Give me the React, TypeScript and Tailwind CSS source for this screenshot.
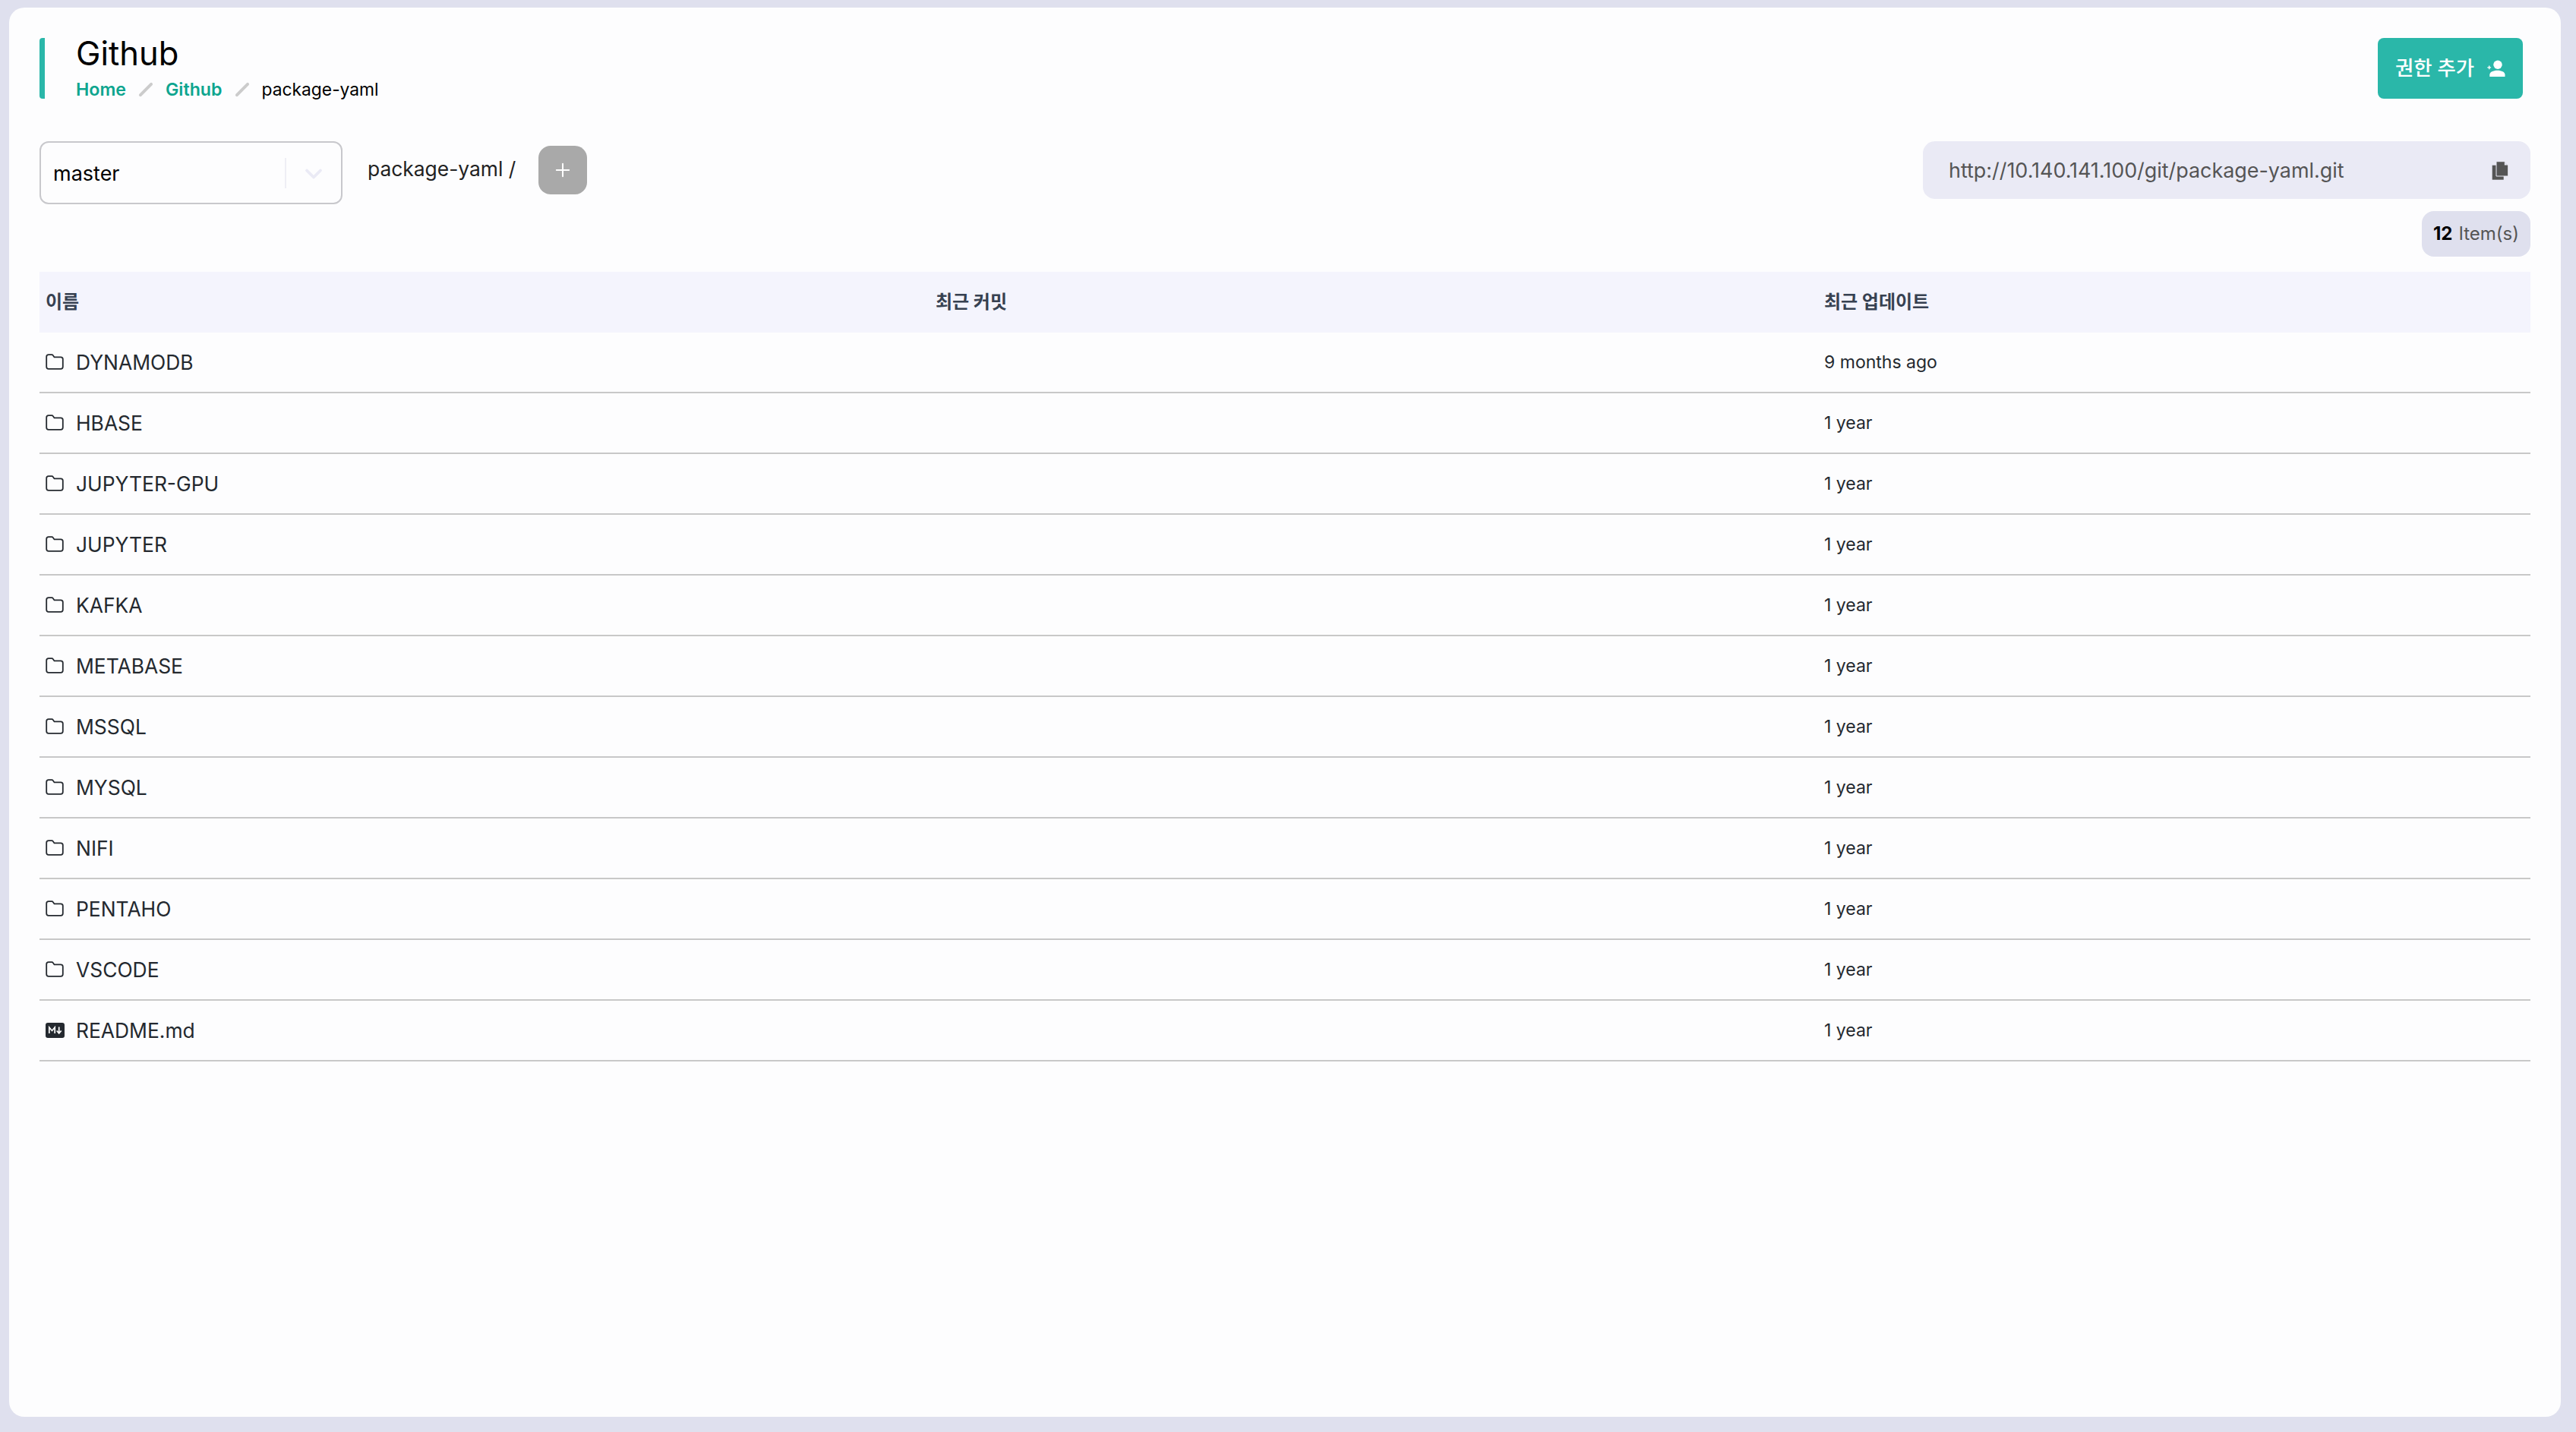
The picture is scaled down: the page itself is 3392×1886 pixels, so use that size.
import { Plus, ChevronDown } from 'lucide-react';

const font = "font-['Inter','Noto_Sans_CJK_KR',sans-serif]";

const rows = [
  { name: 'DYNAMODB', time: '9 months ago' },
  { name: 'HBASE', time: '1 year' },
  { name: 'JUPYTER-GPU', time: '1 year' },
  { name: 'JUPYTER', time: '1 year' },
  { name: 'KAFKA', time: '1 year' },
  { name: 'METABASE', time: '1 year' },
  { name: 'MSSQL', time: '1 year' },
  { name: 'MYSQL', time: '1 year' },
  { name: 'NIFI', time: '1 year' },
  { name: 'PENTAHO', time: '1 year' },
  { name: 'VSCODE', time: '1 year' },
  { name: 'README.md', time: '1 year', file: true },
];

const FolderIcon = () => (
  <svg viewBox="0 0 24 21" className="w-6 h-[21px] text-[#24292f]" fill="none" stroke="currentColor" strokeWidth="1.8">
    <path d="M1.2 5V17C1.2 18.8 2.2 19.8 4 19.8H20C21.8 19.8 22.8 18.8 22.8 17V7C22.8 5.2 21.8 4.4 20 4.4H11.5L9.8 2C9.4 1.4 8.8 1.2 8.2 1.2H4C2.2 1.2 1.2 2.2 1.2 4V5" />
  </svg>
);

const MarkdownIcon = () => (
  <svg viewBox="0 0 25 20" className="w-[25px] h-5 mr-[-1px]">
    <rect width="25" height="20" rx="3" fill="#24292f" />
    <path d="M4.8 14V6L8.5 10.5L12.2 6V14" fill="none" stroke="#fff" strokeWidth="1.7" />
    <path d="M17.7 5.5V13.5M14.7 10.5L17.7 14L20.7 10.5" fill="none" stroke="#fff" strokeWidth="1.7" />
  </svg>
);

const UserPlusIcon = () => (
  <svg viewBox="0 0 24 24" className="w-6 h-6" fill="#fff">
    <circle cx="14" cy="7.3" r="5.7" />
    <path d="M3.3 23V20.5C3.3 17 8 14.8 13.5 14.8S23.5 17 23.5 20.5V23Z" />
    <path d="M0.3 10.2H2V8.5H3.4V10.2H5.1V11.6H3.4V13.3H2V11.6H0.3Z" />
  </svg>
);

const CopyIcon = () => (
  <svg viewBox="0 0 24 25" className="w-6 h-[25px]">
    <rect x="0.7" y="5.7" width="15" height="19" fill="#555" />
    <path d="M6 0.7H16.5L21.7 5.9V20H6Z" fill="#555" stroke="#eaeaf5" strokeWidth="1" />
    <path d="M16.8 1.5V5.6H21Z" fill="#eaeaf5" />
  </svg>
);

const Slash = () => <span className="w-[4px] h-[24px] bg-[#ccc] rotate-45 rounded-sm mx-[24px]" />;

export default function App() {
  return (
    <div className={`${font} w-full h-[1886px] bg-[#dfe0ee] pt-[10px] pl-[12px] pr-[20px] pb-[20px]`}>
      <div className="h-full bg-[#fdfdfe] rounded-[20px] pt-[40px] pl-[40px] pr-[40px]">
        <div className="flex justify-between pr-[10px]">
          <div className="flex border-l-[7px] border-[#2ab7a9] rounded-[4px] pl-[41px] h-[80px]">
            <div>
              <h1 className="text-[43.5px] leading-[40px] text-black">Github</h1>
              <div className="flex items-center text-[23.2px] leading-[24px] mt-[16px]">
                <span className="text-[#0ea58f] font-semibold">Home</span>
                <Slash />
                <span className="text-[#0ea58f] font-semibold">Github</span>
                <Slash />
                <span className="text-black text-[22.8px]">package-yaml</span>
              </div>
            </div>
          </div>
          <button className="w-[191px] h-[80px] rounded-[8px] bg-[#2ab7a9] text-white text-[26.4px] font-medium flex items-center justify-center gap-[17px]">
            권한 추가
            <UserPlusIcon />
          </button>
        </div>

        <div className="flex justify-between mt-[56px]">
          <div className="flex items-start">
            <div className="w-[399px] h-[83px] border-2 border-[#c8c8cc] rounded-[12px] flex items-center pl-[16px] text-[27px] text-black">
              <span className="flex-1 pt-[3px]">master</span>
              <span className="w-[2px] h-[40px] bg-[#eeeef5]" />
              <span className="w-[72px] flex justify-center pt-[3px]">
                <ChevronDown className="w-9 h-9 text-[#eaeaf5]" strokeWidth={2.5} />
              </span>
            </div>
            <span className="ml-[33px] mt-[18px] text-[26.4px] leading-[36px] text-[#222]">package-yaml /</span>
            <button className="ml-[30px] mt-[6px] w-[64px] h-[64px] rounded-[16px] bg-[#a9a9a9] flex items-center justify-center text-white">
              <Plus className="w-[28px] h-[28px]" strokeWidth={1.75} />
            </button>
          </div>
          <div className="w-[800px] h-[76px] rounded-[16px] bg-[#eaeaf5] flex items-center justify-between pl-[34px] pr-[27px] text-[26.9px] text-[#555]">
            <span>http://10.140.141.100/git/package-yaml.git</span>
            <CopyIcon />
          </div>
        </div>

        <div className="flex justify-end mt-[9px]">
          <div className="w-[143px] h-[60px] rounded-[16px] bg-[#dfe0ee] flex items-center justify-center gap-[8px] text-[24px] text-[#555]">
            <span className="font-bold text-black">12</span>
            <span>Item(s)</span>
          </div>
        </div>

        <div className="mt-[20px]">
          <div className="grid grid-cols-[1172px_1170px_1fr] h-[80px] items-center bg-[#f4f4fd] pl-[8px] text-[24px] font-bold text-[#374151]">
            <span>이름</span>
            <span>최근 커밋</span>
            <span>최근 업데이트</span>
          </div>
          {rows.map(row => (
            <div key={row.name} className="grid grid-cols-[1172px_1170px_1fr] h-[80px] items-center border-b-2 border-[#c8c8c8] pl-[8px] text-[#24292f]">
              <div className="flex items-center gap-[16px] text-[26.4px]">
                {row.file ? <MarkdownIcon /> : <FolderIcon />}
                <span className="pt-[1px]">{row.name}</span>
              </div>
              <span />
              <span className="text-[23px]">{row.time}</span>
            </div>
          ))}
        </div>
      </div>
    </div>
  );
}
